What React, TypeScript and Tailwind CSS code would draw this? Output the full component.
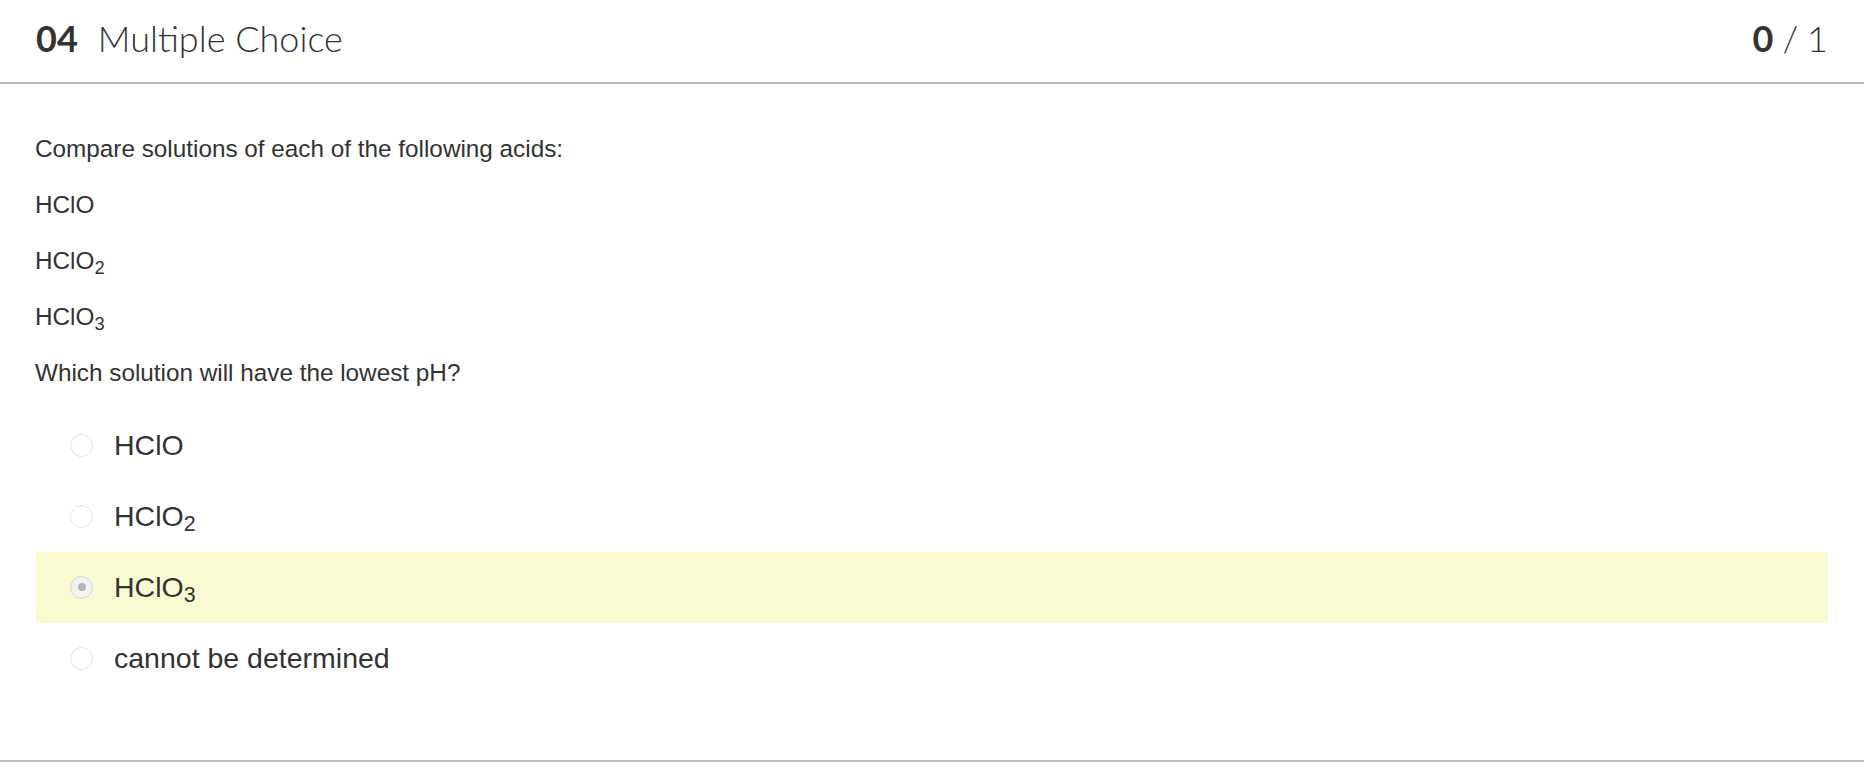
import React, { useState } from 'react';

type Option = { id: string; label: React.ReactNode };

const options: Option[] = [
  { id: 'a', label: 'HClO' },
  { id: 'b', label: <>HClO<sub>2</sub></> },
  { id: 'c', label: <>HClO<sub>3</sub></> },
  { id: 'd', label: 'cannot be determined' },
];

function Radio({ checked }: { checked: boolean }) {
  return (
    <span
      className={`flex h-[23px] w-[23px] shrink-0 items-center justify-center rounded-full border ${
        checked ? 'border-[#d6d6d6] bg-[#f2f2f2]' : 'border-[#e3e3e3] bg-white'
      }`}
    >
      {checked && <span className="h-[8px] w-[8px] rounded-full bg-[#b5b5b5]" />}
    </span>
  );
}

export default function App() {
  const [selected, setSelected] = useState('c');

  return (
    <div className="min-h-screen bg-white text-[#333]">
      <div className="border-b-2 border-[#bdbdbd]">
        {/* Question header */}
        <div className="flex h-[84px] items-center justify-between border-b-2 border-[#bdbdbd] px-9 pb-[6px] font-['Lato',sans-serif] text-[36px]">
          <h1 className="flex items-center">
            <span className="font-bold">04</span>
            <span className="ml-[20px] font-light">Multiple Choice</span>
          </h1>
          <div className="flex items-center">
            <span className="font-bold">0</span>
            <span className="ml-[9px] font-light">/</span>
            <span className="ml-[9px] font-light">1</span>
          </div>
        </div>

        {/* Question body */}
        <div className="px-9 pt-[47px] pb-[66px] font-['Liberation_Sans',Arial,sans-serif]">
          <div className="-ml-px text-[24.3px] leading-[36px]">
            <p className="mb-5">Compare solutions of each of the following acids:</p>
            <p className="mb-5">HClO</p>
            <p className="mb-5">HClO<sub>2</sub></p>
            <p className="mb-5">HClO<sub>3</sub></p>
            <p>Which solution will have the lowest pH?</p>
          </div>

          <div className="mt-[19px] flex flex-col">
            {options.map(opt => (
              <button
                key={opt.id}
                onClick={() => setSelected(opt.id)}
                className={`flex h-[71px] items-center gap-[21px] pl-[34px] pb-px text-left text-[28.5px] ${
                  selected === opt.id ? 'bg-[#fafad2]' : ''
                }`}
              >
                <Radio checked={selected === opt.id} />
                <span>{opt.label}</span>
              </button>
            ))}
          </div>
        </div>
      </div>
    </div>
  );
}
